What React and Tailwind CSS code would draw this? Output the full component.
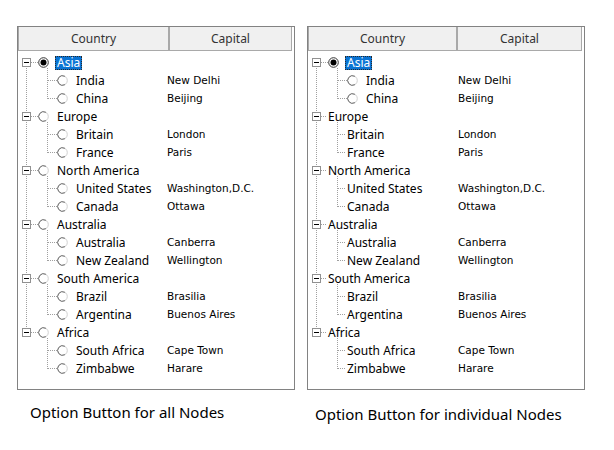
const regions = [
  { name: "Asia", children: [["India", "New Delhi"], ["China", "Beijing"]] },
  { name: "Europe", children: [["Britain", "London"], ["France", "Paris"]] },
  { name: "North America", children: [["United States", "Washington,D.C."], ["Canada", "Ottawa"]] },
  { name: "Australia", children: [["Australia", "Canberra"], ["New Zealand", "Wellington"]] },
  { name: "South America", children: [["Brazil", "Brasilia"], ["Argentina", "Buenos Aires"]] },
  { name: "Africa", children: [["South Africa", "Cape Town"], ["Zimbabwe", "Harare"]] },
];

const DOT = "#a0a0a0";

function Dotted({ x1, y1, x2, y2 }) {
  return <line x1={x1} y1={y1} x2={x2} y2={y2} stroke={DOT} strokeWidth="1" strokeDasharray="1 1" />;
}

function Radio({ cx, checked }) {
  const cy = 8.5;
  if (checked) {
    return (
      <g>
        <circle cx={cx} cy={cy} r="4.8" fill="#fff" stroke="#333" />
        <circle cx={cx} cy={cy} r="3" fill="#000" />
      </g>
    );
  }
  return (
    <g>
      <circle cx={cx} cy={cy} r="4.8" fill="#fff" stroke="#d0d0d0" />
      <path d={`M${cx + 2.4} ${cy - 4.15} A4.8 4.8 0 1 0 ${cx + 2.4} ${cy + 4.15}`} fill="none" stroke="#6e6e6e" />
    </g>
  );
}

function ParentGlyph({ radio, checked, first, last }) {
  return (
    <svg width={radio ? 37 : 18} height="18" className="shrink-0 overflow-visible">
      {!first && <Dotted x1="8.5" y1="0" x2="8.5" y2="4" />}
      {!last && <Dotted x1="8.5" y1="14" x2="8.5" y2="18" />}
      <rect x="4.5" y="4.5" width="8" height="8" fill="#fff" stroke="#919191" />
      <line x1="6" y1="8.5" x2="11" y2="8.5" stroke="#000" />
      <Dotted x1="13" y1="8.5" x2={radio ? 20 : 18} y2="8.5" />
      {radio && <Radio cx={25.5} checked={checked} />}
      <Dotted x1="29.5" y1="14" x2="29.5" y2="18" />
    </svg>
  );
}

function ChildGlyph({ radio, parentLast, last }) {
  return (
    <svg width={radio ? 56 : 37} height="18" className="shrink-0">
      {!parentLast && <Dotted x1="8.5" y1="0" x2="8.5" y2="18" />}
      <Dotted x1="29.5" y1="0" x2="29.5" y2={last ? 9 : 18} />
      <Dotted x1="30" y1="8.5" x2={radio ? 40 : 37} y2="8.5" />
      {radio && <Radio cx={44.5} checked={false} />}
    </svg>
  );
}

function Label({ text, selected }) {
  return (
    <span
      className={`h-[14px] leading-[12px] px-[1px] border whitespace-nowrap ${
        selected ? "bg-[#0a74d4] text-white border-dotted border-[#2a2a2a]" : "border-transparent text-black"
      }`}
    >
      {text}
    </span>
  );
}

function TreePanel({ hasRadio, countryWidth, capitalWidth, firstCol }) {
  return (
    <div className="h-[364px] border border-[#828282] bg-white">
      <div className="flex h-[24px] text-[12px] text-[#333]">
        <div
          className="flex items-center justify-center bg-[#f0f0f0] border border-t-0 border-[#a9a9a9]"
          style={{ width: firstCol }}
        >
          Country
        </div>
        <div
          className="flex items-center justify-center bg-[#f0f0f0] border border-t-0 border-[#a9a9a9]"
          style={{ width: capitalWidth }}
        >
          Capital
        </div>
      </div>
      <div className="pt-[3px] text-[12px]">
        {regions.map((r, i) => {
          const first = i === 0;
          const last = i === regions.length - 1;
          const rRadio = hasRadio(r.name);
          return (
            <div key={r.name}>
              <div className="flex h-[18px] items-center">
                <ParentGlyph radio={rRadio} checked={first} first={first} last={last} />
                <Label text={r.name} selected={first} />
              </div>
              {r.children.map(([country, capital], j) => (
                <div key={country} className="flex h-[18px] items-center">
                  <div className="flex shrink-0 items-center" style={{ width: countryWidth }}>
                    <ChildGlyph radio={rRadio} parentLast={last} last={j === r.children.length - 1} />
                    <Label text={country} />
                  </div>
                  <span className="font-['DejaVu_Sans',sans-serif] text-[10.5px] text-black whitespace-nowrap">
                    {capital}
                  </span>
                </div>
              ))}
            </div>
          );
        })}
      </div>
    </div>
  );
}

export default function App() {
  return (
    <div className="w-[614px] h-[450px] bg-white font-['Noto_Sans',sans-serif] overflow-hidden">
      <div className="flex gap-[12px] pl-[17px] pt-[26px]">
        <div className="w-[278px]">
          <TreePanel hasRadio={() => true} countryWidth={149} firstCol={151} capitalWidth={123} />
          <p className="mt-[12px] ml-[13px] text-[15px] leading-[20px] text-black">Option Button for all Nodes</p>
        </div>
        <div className="w-[278px]">
          <TreePanel hasRadio={(n) => n === "Asia"} countryWidth={150} firstCol={149} capitalWidth={125} />
          <p className="mt-[14px] ml-[8px] text-[15px] leading-[20px] text-black">Option Button for individual Nodes</p>
        </div>
      </div>
    </div>
  );
}
